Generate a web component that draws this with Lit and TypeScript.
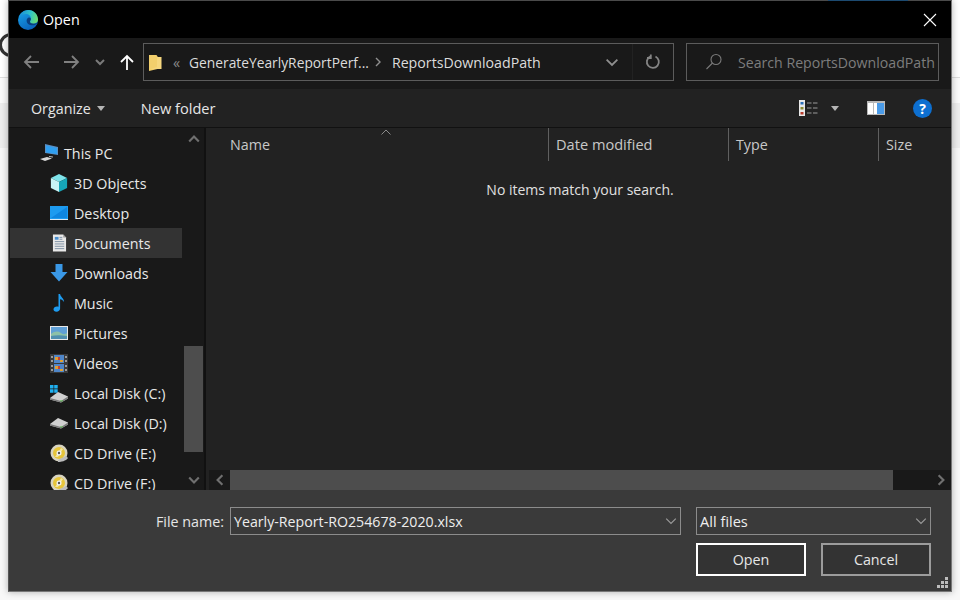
import { LitElement, html, css, svg, TemplateResult } from 'lit';
import { customElement } from 'lit/decorators.js';

const chevron = (d: string, color = '#8a8a8a', w = 10, h = 10, sw = 1.6): TemplateResult => html`
  <svg width=${w} height=${h} viewBox="0 0 10 10" fill="none" stroke=${color} stroke-width=${sw}>
    <path d=${d} />
  </svg>
`;

const navIcons: Record<string, TemplateResult> = {
  pc: html`<svg width="20" height="20" viewBox="0 0 20 20">
    <path d="M5 1l13 3v8l-13-2z" fill="#5a8fc4" />
    <path d="M6 2.500l11 2.500v6l-11-1.600z" fill="#2f9ff0" />
    <path d="M0 16l7-2 5 1.500-7 2.500z" fill="#d8d8d8" />
    <path d="M9 13l4 .6v1l-4-.6z" fill="#bbb" />
  </svg>`,
  cube: html`<svg width="18" height="18" viewBox="0 0 20 20">
    <path d="M10 0l9 4.500-9 4.500-9-4.500z" fill="#7fe3ea" />
    <path d="M1 4.500l9 4.500v11l-9-4.500z" fill="#c8f4f6" />
    <path d="M19 4.500l-9 4.500v11l9-4.500z" fill="#16a6b8" />
  </svg>`,
  desktop: html`<svg width="18" height="14" viewBox="0 0 18 14">
    <rect width="18" height="13" fill="#1d9bf0" />
    <path d="M1 12L17 1v11z" fill="#0f86e0" />
    <path d="M0 13h18v1H0z" fill="#d9e8f5" />
  </svg>`,
  doc: html`<svg width="15" height="18" viewBox="0 0 16 18">
    <path d="M1 0h11l3 3v15H1z" fill="#e8e8e8" />
    <path d="M12 0l3 3h-3z" fill="#9a9a9a" />
    <path d="M3 2.500h4v3H3z" fill="#4a90d0" />
    <path d="M3 7.500h10M3 10h10M3 12.500h10M3 15h10M8 3h3M8 5h3" stroke="#7c8fa3" stroke-width="1" />
  </svg>`,
  down: html`<svg width="18" height="18" viewBox="0 0 18 18">
    <path d="M5.500 0h7v8H17.500L9 17.500.5 8h5z" fill="#3a98e6" />
  </svg>`,
  music: html`<svg width="12" height="18" viewBox="0 0 12 18">
    <path d="M5.500 0h1.600c.3 3 4 4.200 4 8-1-1.600-2.600-2.600-4-2.800V14.500c0 1.800-1.600 3.200-3.600 3.200S.5 16.600.5 15.200s1.600-2.800 3.400-2.800c.6 0 1.200.1 1.600.4z" fill="#1e9cf0" />
  </svg>`,
  pics: html`<svg width="18" height="14" viewBox="0 0 18 14">
    <rect width="18" height="14" fill="#e8e8e8" />
    <rect x="1" y="1" width="16" height="12" fill="#5f9fd6" />
    <path d="M1 8c4-3 7-3 10-1s4 1 6 0v6H1z" fill="#8cc0a8" />
    <path d="M1 10c5-1 10-1 16 0v3H1z" fill="#4f8fb0" />
  </svg>`,
  video: html`<svg width="18" height="19" viewBox="0 0 18 19">
    <rect width="18" height="19" fill="#3a3a3a" />
    <rect x="4" y="1" width="10" height="8" fill="#4f86c8" />
    <rect x="4" y="10" width="10" height="8" fill="#4f86c8" />
    <path d="M5 3h3v3H5zM10 6h3v2h-3zM5 12h3v3H5zM10 15h3v2h-3z" fill="#e0a030" />
    <path d="M8 3h2v3H8zM8 12h2v3H8z" fill="#c84030" />
    <path d="M1 2h2v2H1zM1 6h2v2H1zM1 11h2v2H1zM1 15h2v2H1zM15 2h2v2h-2zM15 6h2v2h-2zM15 11h2v2h-2zM15 15h2v2h-2z" fill="#9a9a9a" />
  </svg>`,
  diskc: html`<svg width="20" height="19" viewBox="0 0 20 19">
    <path d="M1 1h3.500v3.500H1zM5.200 1h3.500v3.500H5.200zM1 5.200h3.500v3.500H1zM5.200 5.200h3.500v3.500H5.200z" fill="#1fb0f0" />
    <path d="M1 14l8-6 10 4.500v2l-7 4-11-3z" fill="#d0d0d0" />
    <path d="M1 14l11 3 7-4.500v2l-7 4-11-3z" fill="#7a7a7a" />
    <path d="M11 16.500h3v.8h-3z" fill="#4cc040" />
  </svg>`,
  diskd: html`<svg width="20" height="12" viewBox="0 0 20 12">
    <path d="M1 7l8-6 10 4.500v2l-7 4-11-3z" fill="#d0d0d0" />
    <path d="M1 7l11 3 7-4.500v2l-7 4-11-3z" fill="#7a7a7a" />
    <path d="M11 9.500h3v.8h-3z" fill="#4cc040" />
  </svg>`,
  cd: html`<svg width="19" height="19" viewBox="0 0 19 19">
    <circle cx="9" cy="9" r="8.500" fill="#d8d4c0" />
    <circle cx="9" cy="9" r="6" fill="#e6c53a" />
    <path d="M5 13L11 4l2 1-5 8z" fill="#f4e8a0" />
    <circle cx="9" cy="9" r="2.500" fill="#f5f5f5" />
    <circle cx="9" cy="9" r="1.200" fill="#555" />
    <path d="M8 18c3 0 8-1 10-4l-2-2-8 4z" fill="#bcbcbc" />
  </svg>`,
};

const navItems = [
  { name: 'This PC', icon: 'pc', level: 0 },
  { name: '3D Objects', icon: 'cube', level: 1 },
  { name: 'Desktop', icon: 'desktop', level: 1 },
  { name: 'Documents', icon: 'doc', level: 1, selected: true },
  { name: 'Downloads', icon: 'down', level: 1 },
  { name: 'Music', icon: 'music', level: 1 },
  { name: 'Pictures', icon: 'pics', level: 1 },
  { name: 'Videos', icon: 'video', level: 1 },
  { name: 'Local Disk (C:)', icon: 'diskc', level: 1 },
  { name: 'Local Disk (D:)', icon: 'diskd', level: 1 },
  { name: 'CD Drive (E:)', icon: 'cd', level: 1 },
  { name: 'CD Drive (F:)', icon: 'cd', level: 1 },
];

const edgeLogo = svg`
  <defs>
    <linearGradient id="eb" x1="0" y1="0" x2="0.6" y2="1">
      <stop offset="0" stop-color="#1aa6ea" />
      <stop offset="1" stop-color="#0a62bc" />
    </linearGradient>
    <linearGradient id="eg" x1="0" y1="0.4" x2="1" y2="0.6">
      <stop offset="0" stop-color="#1d8fd8" />
      <stop offset="0.55" stop-color="#2fc4c8" />
      <stop offset="1" stop-color="#6fdc6a" />
    </linearGradient>
  </defs>
  <circle cx="10" cy="10" r="10" fill="url(#eb)" />
  <path d="M9 9C11 6.500 13 7.500 13 9.500C13 11.500 14.500 13.500 17 13.500C18 13.500 19 13 19.500 12.500C18 16 14 15.500 12 15C9 14 8 11 9 9z" fill="#0a3f80" />
  <path d="M1.500 6C3.500 2 7 0 10.500 0C16 0 20 4.500 20 9.500C20 12.500 17.500 13.500 15 13.500C13 13.500 12 12.500 12 11.500C12.500 10.500 13 10 13 8.800C13 6 10.500 4 8 4C5.500 4 3 4.800 1.500 6z" fill="url(#eg)" />
`;

@customElement('app-root')
export class AppRoot extends LitElement {
  render(): TemplateResult {
    return html`
      <div class="backdrop-o"></div>
      <div class="dialog">
        <div class="top-accent"></div>
        <div class="titlebar">
          <svg class="logo" width="20" height="20" viewBox="0 0 20 20">${edgeLogo}</svg>
          <span class="title">Open</span>
          <svg class="close" width="14" height="14" viewBox="0 0 14 14" stroke="#fff" stroke-width="1.100">
            <path d="M1 1l12 12M13 1L1 13" />
          </svg>
        </div>

        <div class="navbar">
          <svg class="nav-back" width="18" height="14" viewBox="0 0 18 14" fill="none" stroke="#808080" stroke-width="1.800">
            <path d="M16 7H2M8 1L2 7l6 6" />
          </svg>
          <svg class="nav-fwd" width="18" height="14" viewBox="0 0 18 14" fill="none" stroke="#808080" stroke-width="1.800">
            <path d="M2 7h14M10 1l6 6-6 6" />
          </svg>
          <span class="nav-recent">${chevron('M1 3l4 4 4-4', '#7a7a7a', 10, 10, 2)}</span>
          <svg class="nav-up" width="14" height="16" viewBox="0 0 14 16" fill="none" stroke="#fff" stroke-width="1.800">
            <path d="M7 16V2M1 8l6-6 6 6" />
          </svg>
          <div class="address">
            <svg class="folder" width="13" height="17" viewBox="0 0 13 17">
              <path d="M0 1h7.500l1 1.500V15L0 17z" fill="#f2cf6c" />
              <path d="M8 3h4.500v12H2L8 13z" fill="#f6d77e" />
            </svg>
            <span class="crumb-more">«</span>
            <span class="crumb parent">GenerateYearlyReportPerf...</span>
            <span class="crumb-sep">${chevron('M3 1l4 4-4 4', '#8f8f8f', 10, 10, 1.400)}</span>
            <span class="crumb current">ReportsDownloadPath</span>
            <span class="addr-drop">${chevron('M0.500 3l4.500 4.500L9.500 3', '#8f8f8f', 12, 12, 1.500)}</span>
            <span class="addr-refresh">
              <svg width="16" height="16" viewBox="0 0 16 16" fill="none" stroke="#858585" stroke-width="1.800">
                <path d="M10.500 2.500a6 6 0 1 1-5.500.1" />
                <path d="M5.800 .5v3.500H2" />
              </svg>
            </span>
          </div>
          <div class="search">
            <svg width="18" height="18" viewBox="0 0 18 18" fill="none" stroke="#7a7a7a" stroke-width="1.100">
              <circle cx="11" cy="6.500" r="5" />
              <path d="M7.500 10L1.500 16" />
            </svg>
            <span>Search ReportsDownloadPath</span>
          </div>
        </div>

        <div class="toolbar">
          <span class="tool organize">Organize<i class="caret"></i></span>
          <span class="tool newfolder">New folder</span>
          <span class="spacer"></span>
          <svg class="view" width="19" height="16" viewBox="0 0 19 16">
            <rect width="6" height="16" fill="#e8e8e8" />
            <rect x="1.500" y="2" width="3" height="2.500" fill="#2a6fb8" />
            <rect x="1.500" y="7" width="3" height="2.500" fill="#8a8a30" />
            <rect x="1.500" y="12" width="3" height="2.500" fill="#b83a2a" />
            <path d="M8 3h4.500M14 3h4.500M8 8h4.500M14 8h4.500M8 13h4.500M14 13h4.500" stroke="#9a9a9a" stroke-width="1" />
          </svg>
          <i class="caret view-caret"></i>
          <svg class="pane" width="18" height="14" viewBox="0 0 18 14">
            <rect width="18" height="14" fill="#b8b8b8" />
            <rect x="1" y="2" width="5" height="11" fill="#fff" />
            <rect x="7" y="2" width="3" height="11" fill="#fff" />
            <rect x="10" y="2" width="7" height="11" fill="#4a9be8" />
          </svg>
          <span class="help">?</span>
        </div>

        <div class="body">
          <div class="sidebar">
            <div class="tree">
              ${navItems.map(
                (n) => html`
                  <div class="tree-row ${n.selected ? 'selected' : ''} level-${n.level}">
                    <span class="tree-icon">${navIcons[n.icon]}</span>
                    <span>${n.name}</span>
                  </div>
                `
              )}
            </div>
            <div class="vscroll">
              <span class="arrow">${chevron('M1 7l4-4 4 4', '#6f6f6f', 12, 12, 1.800)}</span>
              <span class="track"><span class="thumb"></span></span>
              <span class="arrow bottom">${chevron('M1 3l4 4 4-4', '#6f6f6f', 12, 12, 1.800)}</span>
            </div>
          </div>

          <div class="files">
            <div class="cols">
              <span class="col name">
                Name
                <svg class="sort" width="10" height="6" viewBox="0 0 10 6" fill="none" stroke="#8a8a8a">
                  <path d="M.5 5.500L5 1l4.500 4.500" />
                </svg>
              </span>
              <span class="col date">Date modified</span>
              <span class="col type">Type</span>
              <span class="col size">Size</span>
            </div>
            <div class="empty">No items match your search.</div>
            <div class="hscroll">
              <span class="harrow">${chevron('M7 1L3 5l4 4', '#6f6f6f', 12, 12, 1.800)}</span>
              <span class="hthumb"></span>
              <span class="hrest"></span>
              <span class="harrow">${chevron('M3 1l4 4-4 4', '#6f6f6f', 12, 12, 1.800)}</span>
            </div>
          </div>
        </div>

        <div class="footer">
          <div class="footer-row">
            <label>File name:</label>
            <div class="field filename">
              <span>Yearly-Report-RO254678-2020.xlsx</span>
              ${chevron('M1 3l4 4 4-4', '#9a9a9a', 12, 12, 1)}
            </div>
            <div class="field filter">
              <span>All files</span>
              ${chevron('M1 3l4 4 4-4', '#9a9a9a', 12, 12, 1)}
            </div>
          </div>
          <div class="buttons">
            <button class="btn primary">Open</button>
            <button class="btn">Cancel</button>
          </div>
          <svg class="grip" width="12" height="12" viewBox="0 0 12 12" fill="#bdbdbd">
            <path d="M8 0h3v3H8zM4 4h3v3H4zM8 4h3v3H8zM0 8h3v3H0zM4 8h3v3H4zM8 8h3v3H8z" />
          </svg>
        </div>
      </div>
    `;
  }

  static styles = css`
    :host {
      display: block;
      position: relative;
      width: 960px;
      height: 600px;
      box-sizing: border-box;
      padding: 0 8px 8px 8px;
      background: linear-gradient(
        #fff 0 77px,
        #dedede 77px 78px,
        #fbfbfb 78px 103px,
        #eeeeee 103px 148px,
        #f8f8f8 148px
      );
      overflow: hidden;
      font-family: 'Open Sans', 'Noto Sans', sans-serif;
      font-size: 14.3px;
      color: #e6e6e6;
    }

    .backdrop-o {
      position: absolute;
      left: -1px;
      top: 33px;
      width: 18px;
      height: 18px;
      border: 3px solid #333;
      border-radius: 50%;
    }

    .dialog {
      position: relative;
      display: flex;
      flex-direction: column;
      width: 944px;
      height: 592px;
      box-sizing: border-box;
      border: 1px solid #777;
      border-top-color: #4a4a4a;
      border-left-color: #555;
      box-shadow: 0 0 7px rgba(0, 0, 0, 0.3);
    }

    .top-accent {
      position: absolute;
      left: 819px;
      top: -1px;
      width: 80px;
      height: 1px;
      background: #1c4a70;
    }

    .titlebar {
      display: flex;
      align-items: center;
      height: 37px;
      flex: none;
      padding: 0 14px 0 9px;
      box-sizing: border-box;
      background: #000;
      color: #fff;
    }

    .title {
      margin-left: 5px;
      flex: 1;
    }

    .navbar {
      display: flex;
      align-items: center;
      height: 51px;
      flex: none;
      padding: 0 12px 3px 14px;
      box-sizing: border-box;
      background: #191919;
    }

    .nav-fwd {
      margin-left: 21px;
    }

    .nav-recent {
      display: flex;
      margin-left: 15px;
    }

    .nav-up {
      margin-left: 15px;
    }

    .address {
      display: flex;
      align-items: center;
      width: 531px;
      height: 38px;
      margin-left: 9px;
      box-sizing: border-box;
      border: 1px solid #5c5c5c;
      padding-left: 5px;
      color: #dcdcdc;
    }

    .folder {
      flex: none;
    }

    .crumb-more {
      margin-left: 11px;
      color: #8a8a8a;
      width: 16px;
    }

    .crumb.parent {
      font-size: 13.8px;
    }

    .crumb.current {
      font-size: 14.2px;
    }

    .crumb-sep {
      display: flex;
      margin: 0 9px 0 4px;
    }

    .addr-drop {
      display: flex;
      margin-left: auto;
      margin-right: 14px;
    }

    .addr-refresh {
      display: flex;
      align-items: center;
      justify-content: center;
      width: 41px;
      height: 100%;
      border-left: 1px solid #222;
      box-sizing: border-box;
    }

    .search {
      display: flex;
      align-items: center;
      gap: 15px;
      width: 253px;
      height: 38px;
      margin-left: 12px;
      padding-left: 18px;
      box-sizing: border-box;
      border: 1px solid #5c5c5c;
      color: #7d7d7d;
      font-size: 14.15px;
      white-space: nowrap;
    }

    .toolbar {
      display: flex;
      align-items: center;
      height: 38px;
      flex: none;
      padding: 0 19px 0 22px;
      box-sizing: border-box;
      background: #222;
    }

    .tool {
      color: #e6e6e6;
      display: flex;
      align-items: center;
    }

    .newfolder {
      margin-left: 36px;
      font-size: 14.6px;
    }

    .spacer {
      flex: 1;
    }

    .caret {
      display: inline-block;
      margin-left: 6px;
      border: 4px solid transparent;
      border-top: 5px solid #b5b5b5;
      border-bottom: 0;
    }

    .view-caret {
      margin-left: 13px;
    }

    .pane {
      margin-left: 28px;
    }

    .help {
      display: flex;
      align-items: center;
      justify-content: center;
      width: 19px;
      height: 19px;
      margin-left: 28px;
      border-radius: 50%;
      background: #0d6fd0;
      color: #fff;
      font-weight: 700;
      font-size: 14px;
    }

    .body {
      display: flex;
      flex: 1;
      min-height: 0;
      border-top: 1px solid #111;
    }

    .sidebar {
      display: flex;
      width: 197px;
      flex: none;
      box-sizing: border-box;
      background: #191919;
      border-right: 2px solid #111;
      overflow: hidden;
    }

    .tree {
      width: 172px;
      margin-left: 1px;
      flex: none;
      padding-top: 10px;
      overflow: hidden;
    }

    .tree-row {
      display: flex;
      align-items: center;
      height: 30px;
      white-space: nowrap;
      color: #e8e8e8;
    }

    .tree-row.selected {
      background: #333;
    }

    .tree-icon {
      display: flex;
      align-items: center;
      justify-content: center;
      width: 20px;
      margin-right: 5px;
    }

    .level-0 {
      padding-left: 30px;
    }

    .level-0 .tree-icon {
      margin-right: 4px;
    }

    .level-1 {
      padding-left: 39px;
    }

    .vscroll {
      display: flex;
      flex-direction: column;
      align-items: center;
      width: 19px;
      margin-left: 2px;
    }

    .arrow {
      display: flex;
      align-items: center;
      justify-content: center;
      height: 22px;
      flex: none;
    }

    .arrow.bottom {
      height: 20px;
    }

    .track {
      flex: 1;
      width: 100%;
      position: relative;
    }

    .thumb {
      position: absolute;
      left: 0;
      right: 0;
      top: 196px;
      height: 106px;
      background: #4d4d4d;
    }

    .files {
      display: flex;
      flex-direction: column;
      flex: 1;
      min-width: 0;
      background: #222;
    }

    .cols {
      display: flex;
      height: 33px;
      flex: none;
      color: #c8c8c8;
      white-space: nowrap;
    }

    .col {
      display: flex;
      align-items: center;
      box-sizing: border-box;
      padding: 0 0 1px 7px;
      border-right: 1px solid #606060;
    }

    .col.name {
      position: relative;
      width: 343px;
      padding-left: 24px;
    }

    .col.date {
      width: 180px;
      font-size: 14.6px;
    }

    .col.type {
      width: 150px;
    }

    .col.size {
      border-right: 0;
    }

    .sort {
      position: absolute;
      left: 175px;
      top: 1px;
    }

    .empty {
      flex: 1;
      padding: 19px 0 0 3px;
      text-align: center;
      color: #e0e0e0;
      font-size: 14px;
    }

    .hscroll {
      display: flex;
      align-items: center;
      height: 20px;
      flex: none;
      margin-left: 3px;
      background: #191919;
      box-sizing: border-box;
    }

    .harrow {
      display: flex;
      align-items: center;
      justify-content: center;
      width: 21px;
      flex: none;
    }

    .hthumb {
      width: 663px;
      height: 100%;
      background: #4d4d4d;
    }

    .hrest {
      flex: 1;
    }

    .footer {
      position: relative;
      flex: none;
      height: 101px;
      box-sizing: border-box;
      padding: 17px 20px 0 0;
      background: #3a3a3a;
    }

    .footer-row {
      display: flex;
      align-items: center;
    }

    label {
      width: 221px;
      text-align: right;
      padding-right: 6px;
      box-sizing: border-box;
      color: #e6e6e6;
    }

    .field {
      display: flex;
      align-items: center;
      justify-content: space-between;
      height: 28px;
      box-sizing: border-box;
      padding: 0 3px;
      border: 1px solid #8c8c8c;
      color: #eee;
    }

    .filename {
      width: 451px;
      font-size: 14.2px;
    }

    .filter {
      width: 235px;
      margin-left: 15px;
      font-size: 14.6px;
    }

    .buttons {
      display: flex;
      justify-content: flex-end;
      gap: 15px;
      margin-top: 8px;
    }

    .btn {
      width: 110px;
      height: 33px;
      box-sizing: border-box;
      border: 2px solid #9c9c9c;
      background: #333;
      color: #e6e6e6;
      font: inherit;
      padding: 0;
    }

    .btn.primary {
      border-color: #fff;
    }

    .grip {
      position: absolute;
      right: 2px;
      bottom: 2px;
    }
  `;
}
